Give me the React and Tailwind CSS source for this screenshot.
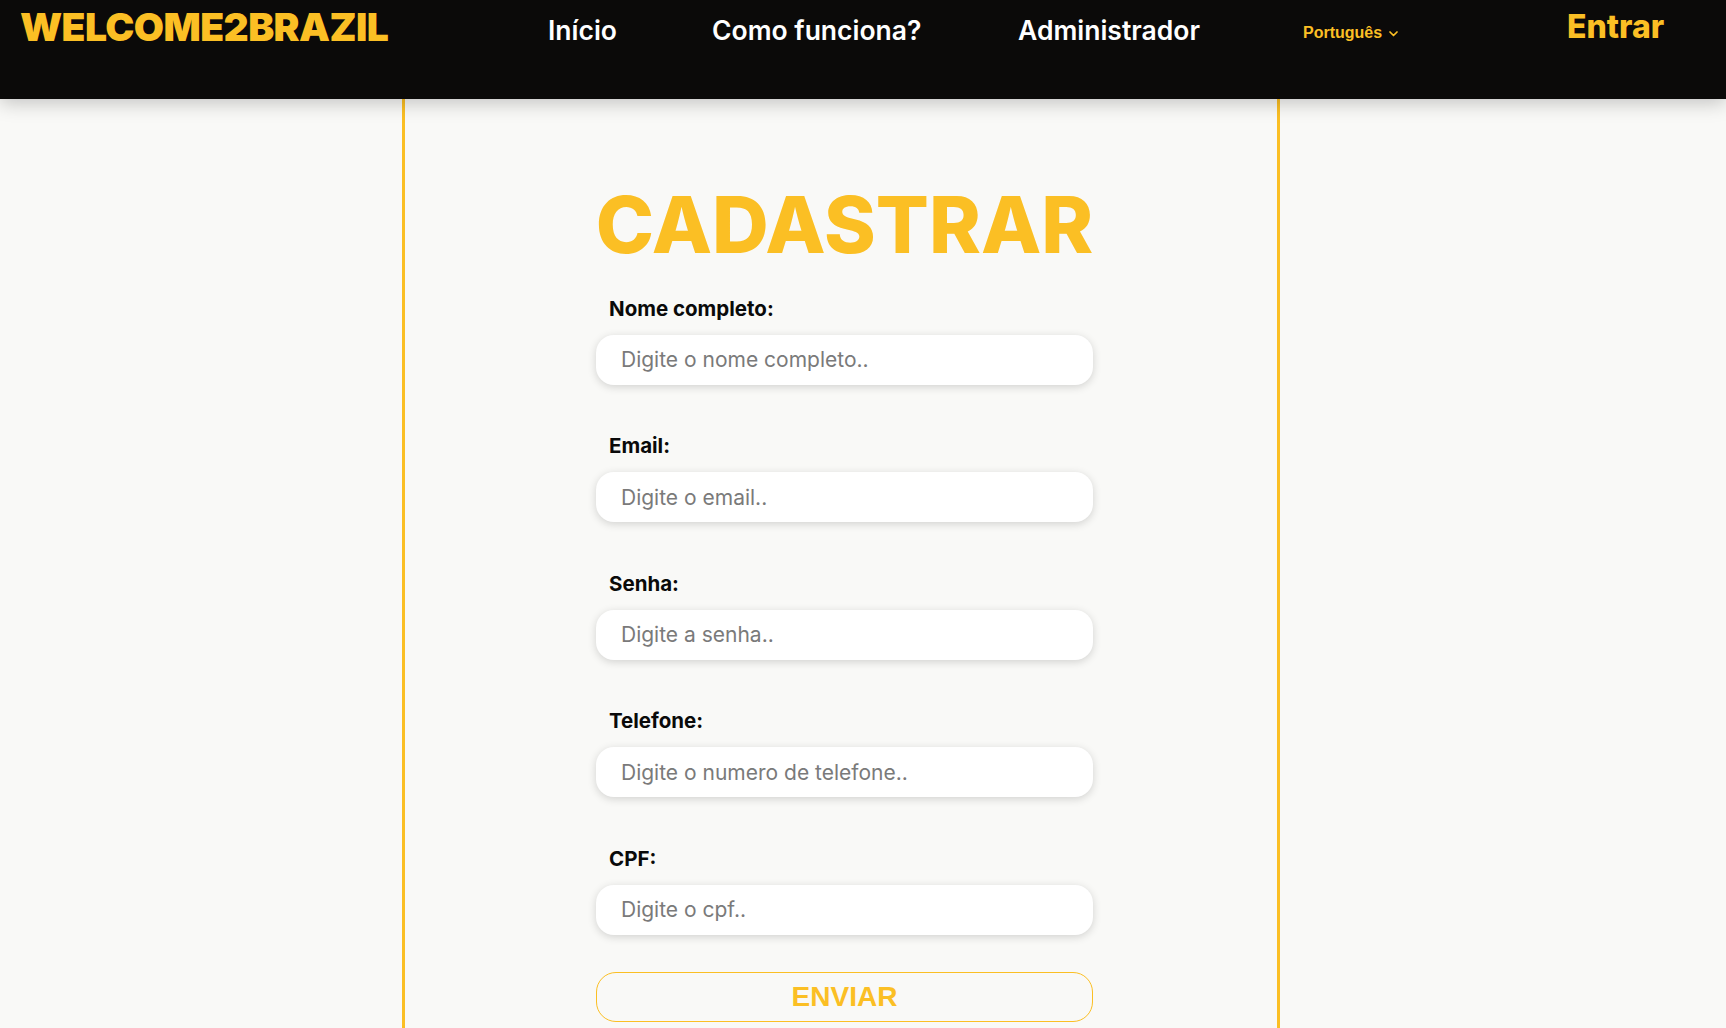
import React from "react";

const fields = [
  { label: "Nome completo:", ph: "Digite o nome completo..", type: "text" },
  { label: "Email:", ph: "Digite o email..", type: "email" },
  { label: "Senha:", ph: "Digite a senha..", type: "password" },
  { label: "Telefone:", ph: "Digite o numero de telefone..", type: "text" },
  { label: "CPF:", ph: "Digite o cpf..", type: "text" },
];

export default function App() {
  return (
    <div className="h-[1028px] overflow-hidden bg-[#f9f9f7] font-['Inter',sans-serif]">
      <header className="relative z-10 flex h-[99px] items-start bg-[#0b0a09] shadow-[0_4px_18px_rgba(0,0,0,0.22)]">
        <div className="w-[548px] pl-[20px] pt-[7px]">
          <span className="block text-[39px] font-black leading-none tracking-[-0.015em] text-[#fbbf24]">
            WELCOME2BRAZIL
          </span>
        </div>
        <a className="block w-[164px] pt-[17px] text-[26.5px] font-semibold leading-none text-white">Início</a>
        <a className="block w-[306px] pt-[17px] text-[26.5px] font-semibold leading-none text-white">Como funciona?</a>
        <a className="block w-[285px] pt-[17px] text-[26.5px] font-semibold leading-none text-white">Administrador</a>
        <div className="flex w-[264px] items-center pt-[25px] font-['Liberation_Sans',Arial,sans-serif] text-[16px] font-bold leading-none text-[#fbbf24]">
          <span>Português</span>
          <svg className="ml-[7px] mt-[1px]" width="9" height="6" viewBox="0 0 9 6" fill="none">
            <polyline points="1,1 4.5,4.5 8,1" stroke="#fbbf24" strokeWidth="1.7" strokeLinecap="round" strokeLinejoin="round" />
          </svg>
        </div>
        <a className="block pt-[11px] text-[32px] font-extrabold leading-none text-[#fbbf24]">Entrar</a>
      </header>

      <main className="ml-[402px] flex h-[929px] w-[878px] flex-col items-center border-x-[3px] border-[#fbbf24] bg-[#f9f9f7] pl-[7px]">
        <h1 className="mt-[87px] text-[78.5px] font-extrabold leading-none text-[#fbbf24]">CADASTRAR</h1>
        <form className="mt-[30px] flex w-[497px] flex-col gap-[47.5px]" onSubmit={(e) => e.preventDefault()}>
          {fields.map((f) => (
            <div key={f.label} className="flex flex-col">
              <label className="pl-[13px] text-[20.5px] font-bold leading-[28px] text-[#0a0a0a]">{f.label}</label>
              <input
                type={f.type === "password" ? "text" : f.type}
                placeholder={f.ph}
                className="mt-[12px] h-[50px] w-full rounded-[18px] bg-white pl-[25px] text-[21px] text-[#333] shadow-[0_2px_8px_rgba(0,0,0,0.16)] outline-none placeholder:text-[#7a7a7a]"
              />
            </div>
          ))}
        </form>
        <button className="mt-[37px] h-[50px] w-[497px] rounded-[20px] border border-[#fbbf24] bg-transparent font-['Liberation_Sans',Arial,sans-serif] text-[28px] font-bold text-[#fbbf24]">
          ENVIAR
        </button>
      </main>
    </div>
  );
}
